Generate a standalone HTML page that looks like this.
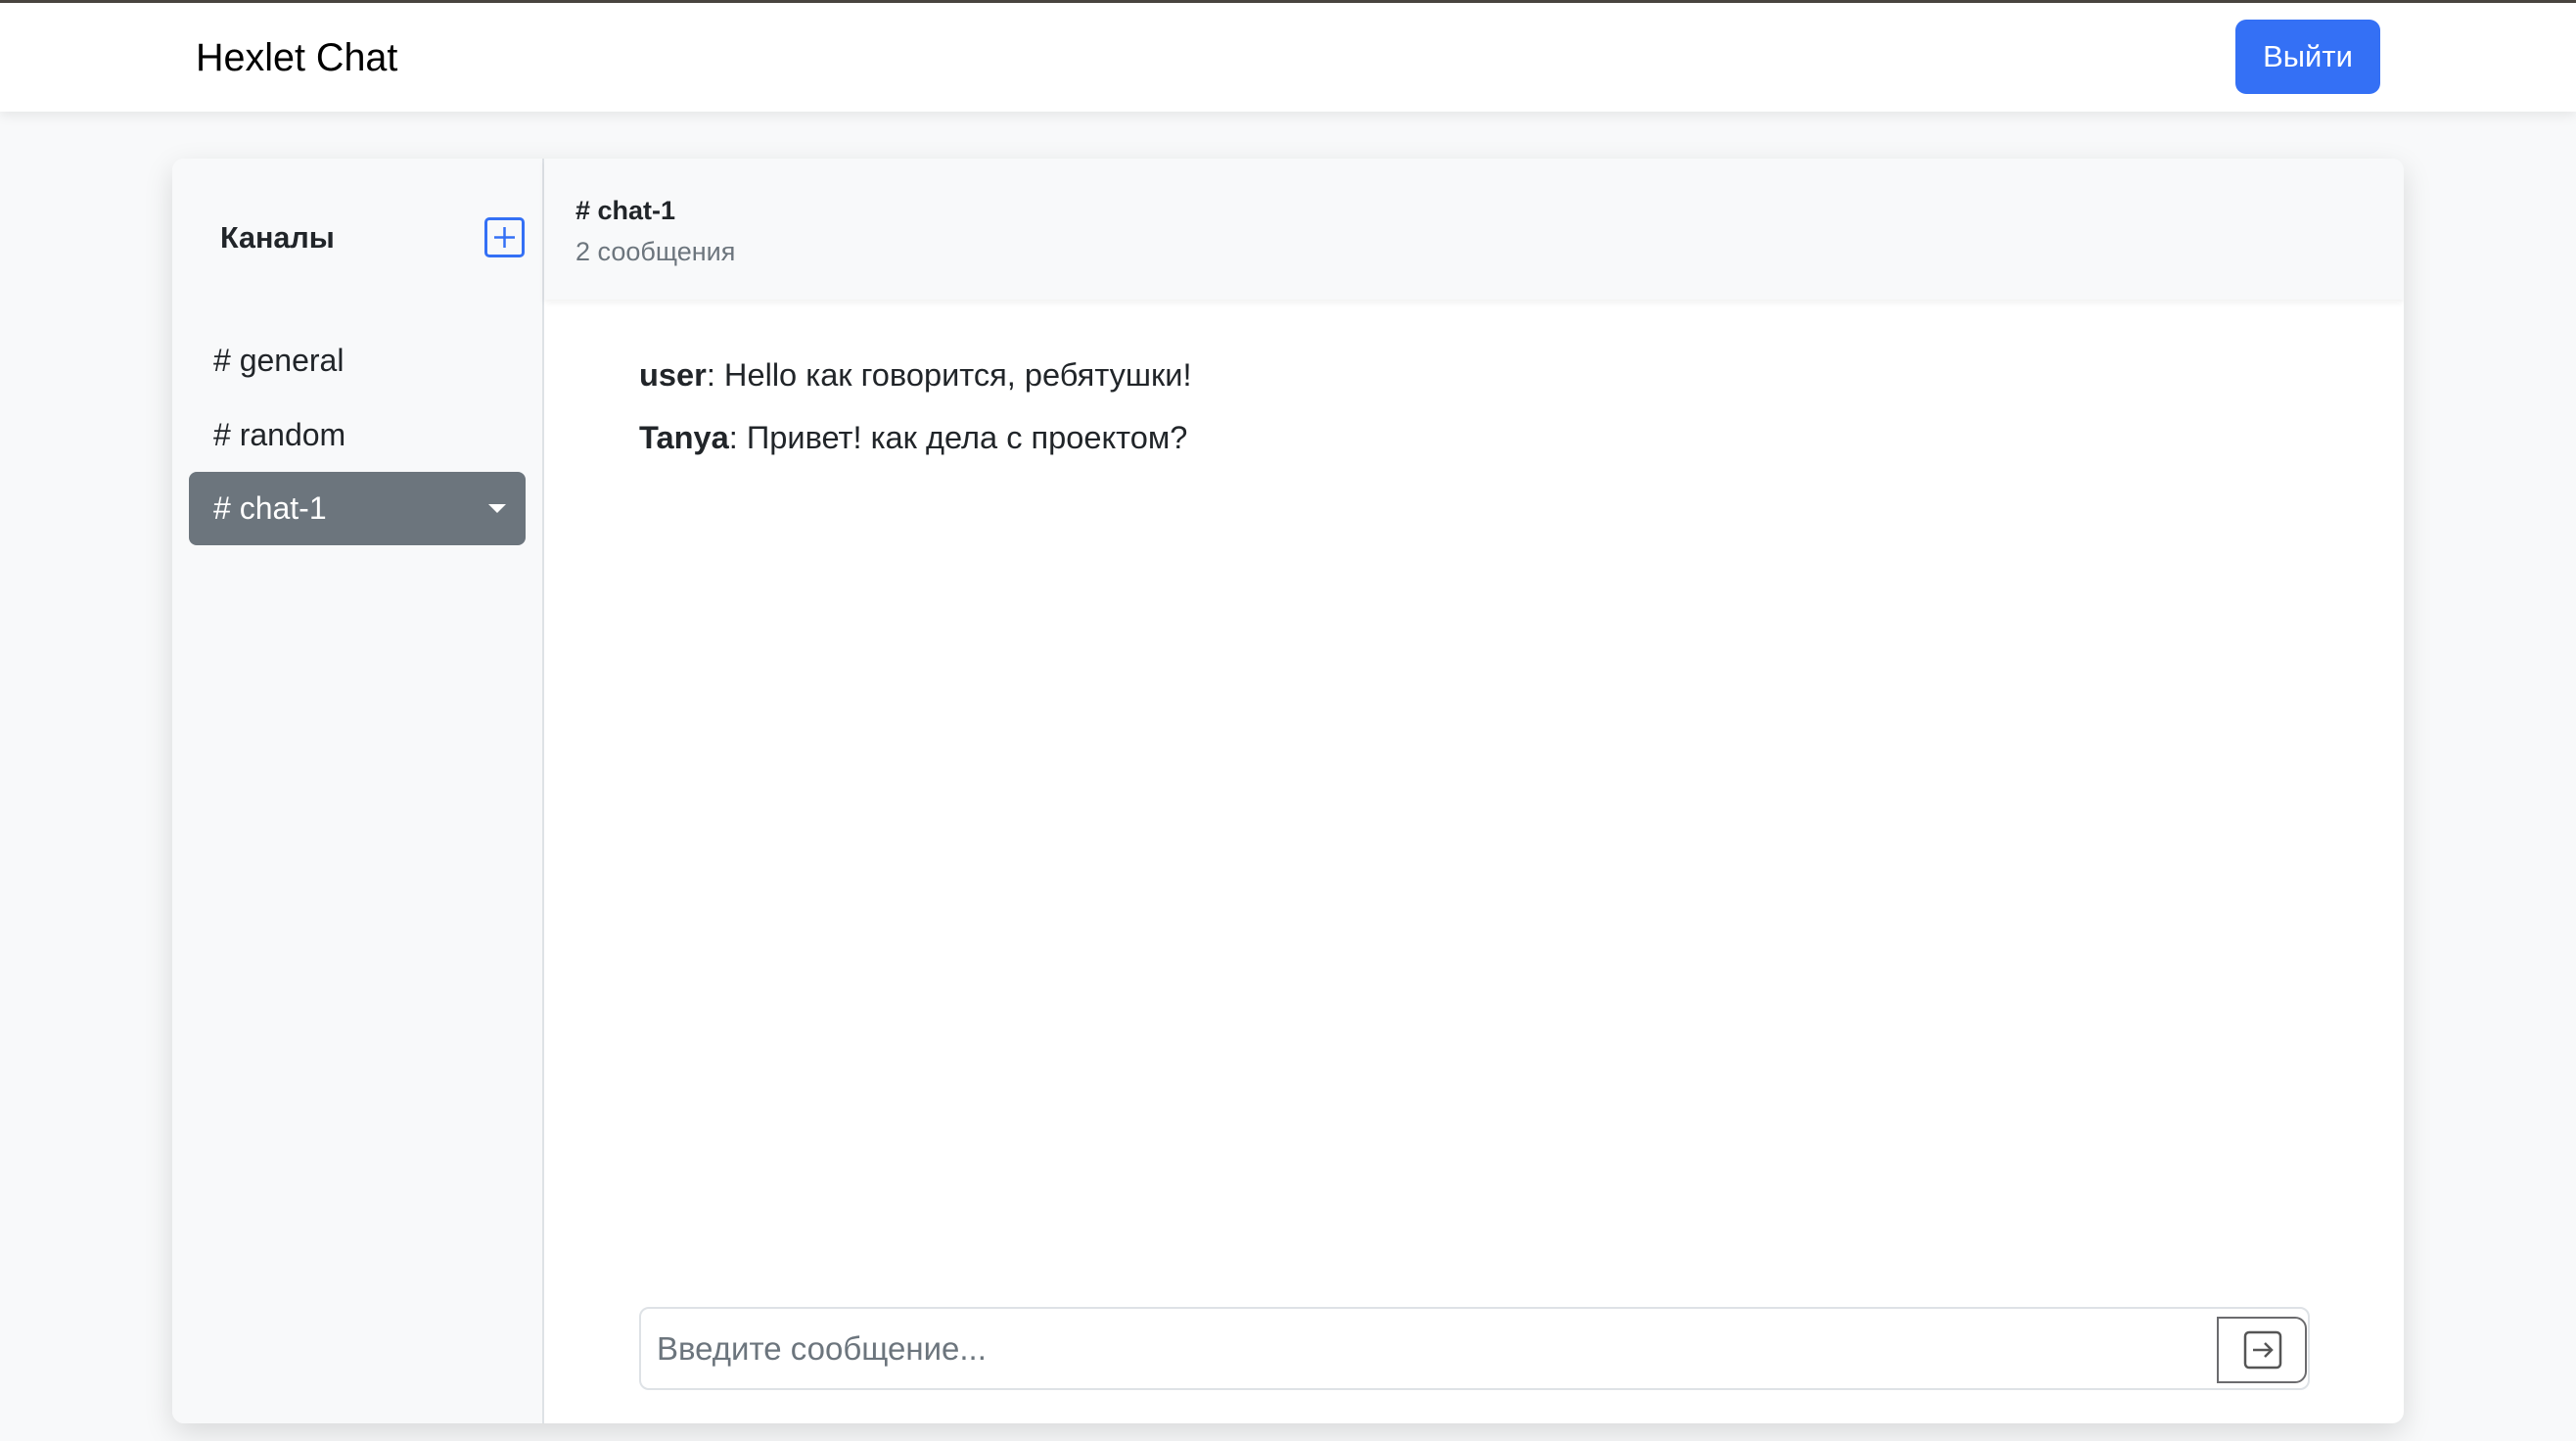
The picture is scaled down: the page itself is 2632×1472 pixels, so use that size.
<!DOCTYPE html>
<html><head><meta charset="utf-8"><style>
*{box-sizing:border-box;margin:0;padding:0}
body{width:2632px;height:1472px;background:#f8f9fa;font-family:"Liberation Sans","Noto Sans CJK SC",sans-serif;color:#212529;position:relative;overflow:hidden}
.top{position:absolute;left:0;top:0;width:2632px;height:3px;background:#48443f;z-index:3}
.nav{position:absolute;left:0;top:0;width:2632px;height:114px;background:#fff;box-shadow:0 4px 12px rgba(0,0,0,.08);z-index:2}
.brand{position:absolute;left:200px;top:35px;font-size:39.5px;color:#000;line-height:48px}
.out{position:absolute;left:2284px;top:20px;width:148px;height:76px;background:#3470f5;border-radius:11px;color:#fff;font-size:31px;line-height:76px;text-align:center}
.card{position:absolute;left:176px;top:162px;width:2280px;height:1292px;background:#fff;border-radius:12px;box-shadow:0 10px 30px rgba(0,0,0,.13);overflow:hidden}
.side{position:absolute;left:0;top:0;width:380px;height:100%;background:#f8f9fa;border-right:2px solid #dee2e6}
.ch{position:absolute;left:49px;top:61px;font-size:30.5px;font-weight:bold;line-height:40px}
.plus{position:absolute;left:319px;top:60px;width:41px;height:41px;border:3px solid #3470f5;border-radius:5px}
.item{position:absolute;left:17px;width:344px;height:75px;font-size:32px;line-height:75px;padding-left:25px}
.act{background:#6c757d;color:#fff;border-radius:8px}
.caret{position:absolute;right:20px;top:33px;width:0;height:0;border-left:9px solid transparent;border-right:9px solid transparent;border-top:9px solid #fff}
.head{position:absolute;left:380px;top:0;width:1900px;height:144px;background:#f8f9fa;box-shadow:0 3px 6px rgba(0,0,0,.06)}
.h1{position:absolute;left:32px;top:36px;font-size:27px;font-weight:bold;line-height:34px}
.h2{position:absolute;left:32px;top:78px;font-size:27px;color:#6c757d;line-height:34px}
.msg{position:absolute;left:477px;font-size:32.6px;line-height:40px}
.inp{position:absolute;left:477px;top:1173px;width:1707px;height:85px;border:2px solid #dee2e6;border-radius:10px}
.ph{position:absolute;left:16px;top:21px;font-size:33px;color:#6c757d;line-height:40px}
.send{position:absolute;right:1px;top:8px;width:92px;height:68px;border:2px solid #6b6b6e;border-radius:0 12px 12px 0}
</style></head><body>
<div class="top"></div>
<div class="nav"><div class="brand">Hexlet Chat</div><div class="out">Выйти</div></div>
<div class="card">
 <div class="side">
  <div class="ch">Каналы</div>
  <div class="plus"><svg width="35" height="35" viewBox="0 0 35 35" style="display:block"><path d="M17.5 7v21M7 17.5h21" stroke="#3470f5" stroke-width="2.5"/></svg></div>
  <div class="item" style="top:169px"># general</div>
  <div class="item" style="top:245px"># random</div>
  <div class="item act" style="top:320px"># chat-1<div class="caret"></div></div>
 </div>
 <div class="head"><div class="h1"># chat-1</div><div class="h2">2 сообщения</div></div>
 <div class="msg" style="top:201px"><b>user</b>: Hello как говорится, ребятушки!</div>
 <div class="msg" style="top:265px"><b>Tanya</b>: Привет! как дела с проектом?</div>
 <div class="inp"><div class="ph">Введите сообщение...</div>
  <div class="send"><svg width="40" height="40" viewBox="0 0 40 40" style="position:absolute;left:25px;top:12px"><rect x="2" y="2" width="36" height="36" rx="4" fill="none" stroke="#555" stroke-width="2.5"/><path d="M10 20h19M22 13l7 7-7 7" fill="none" stroke="#555" stroke-width="2.5"/></svg></div>
 </div>
</div>
</body></html>
